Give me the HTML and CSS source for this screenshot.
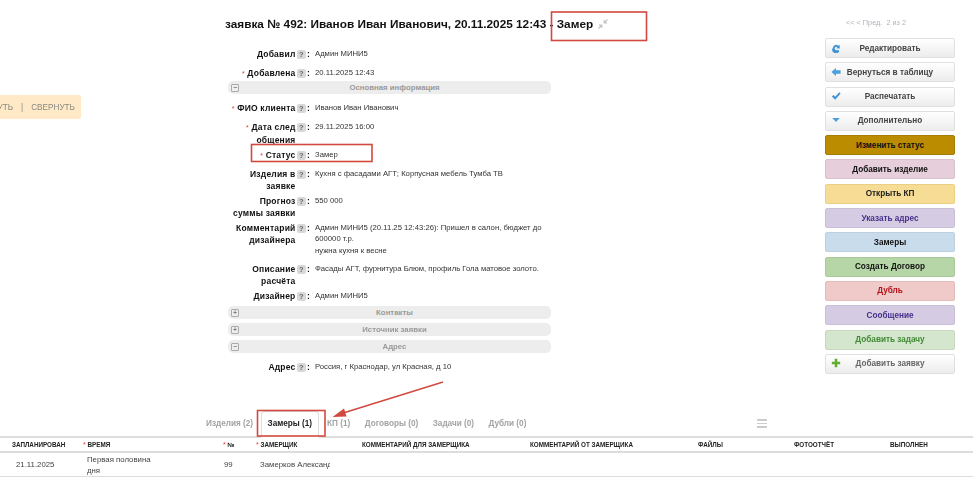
FILE: index.html
```html
<!DOCTYPE html>
<html lang="ru">
<head>
<meta charset="utf-8">
<title>заявка № 492</title>
<link rel="stylesheet" href="styles.css">
</head>
<body>
<div class="page">
  <div class="toast"><span class="toast-text">РАЗВЕРНУТЬ<span class="toast-sep">|</span>СВЕРНУТЬ</span></div>

  <div class="main">
    <div class="center">
      <h1 class="title">заявка № 492: Иванов Иван Иванович, 20.11.2025 12:43 - Замер
        <svg class="title-icon" viewBox="0 0 10 10" width="10" height="10"><path d="M0.5 9.5 4 6M1 6.2h2.8V9M9.5 .5 6 4M9 3.8H6.2V1" fill="none" stroke="#c4c4c4" stroke-width="1.2"/></svg>
      </h1>

      <div class="row">
        <div class="label"><span class="label-text">Добавил</span><span class="help">?</span><span class="colon">:</span></div>
        <div class="value">Админ МИНИ5</div>
      </div>
      <div class="row">
        <div class="label"><span class="label-text"><i class="req">*</i> Добавлена</span><span class="help">?</span><span class="colon">:</span></div>
        <div class="value">20.11.2025 12:43</div>
      </div>

      <div class="section section-first"><span class="toggle">−</span><span class="section-name">Основная информация</span></div>

      <div class="row">
        <div class="label"><span class="label-text"><i class="req">*</i> ФИО клиента</span><span class="help">?</span><span class="colon">:</span></div>
        <div class="value">Иванов Иван Иванович</div>
      </div>
      <div class="row row-next">
        <div class="label"><span class="label-text"><i class="req">*</i> Дата след<br>общения</span><span class="help">?</span><span class="colon">:</span></div>
        <div class="value">29.11.2025 16:00</div>
      </div>
      <div class="row">
        <div class="label"><span class="label-text"><i class="req">*</i> Статус</span><span class="help">?</span><span class="colon">:</span></div>
        <div class="value">Замер</div>
      </div>
      <div class="row">
        <div class="label"><span class="label-text">Изделия в<br>заявке</span><span class="help">?</span><span class="colon">:</span></div>
        <div class="value">Кухня с фасадами АГТ; Корпусная мебель Тумба ТВ</div>
      </div>
      <div class="row">
        <div class="label"><span class="label-text">Прогноз<br>суммы заявки</span><span class="help">?</span><span class="colon">:</span></div>
        <div class="value">550 000</div>
      </div>
      <div class="row row-comment">
        <div class="label"><span class="label-text">Комментарий<br>дизайнера</span><span class="help">?</span><span class="colon">:</span></div>
        <div class="value">Админ МИНИ5 (20.11.25 12:43:26): Пришел в салон, бюджет до<br>600000 т.р.<br>нужна кухня к весне</div>
      </div>
      <div class="row">
        <div class="label"><span class="label-text">Описание<br>расчёта</span><span class="help">?</span><span class="colon">:</span></div>
        <div class="value">Фасады АГТ, фурнитура Блюм, профиль Гола матовое золото.</div>
      </div>
      <div class="row">
        <div class="label"><span class="label-text">Дизайнер</span><span class="help">?</span><span class="colon">:</span></div>
        <div class="value">Админ МИНИ5</div>
      </div>

      <div class="section section-top"><span class="toggle">+</span><span class="section-name">Контакты</span></div>
      <div class="section"><span class="toggle">+</span><span class="section-name">Источник заявки</span></div>
      <div class="section section-last"><span class="toggle">−</span><span class="section-name">Адрес</span></div>

      <div class="row">
        <div class="label"><span class="label-text">Адрес</span><span class="help">?</span><span class="colon">:</span></div>
        <div class="value">Россия, г Краснодар, ул Красная, д 10</div>
      </div>
    </div>

    <aside class="side">
      <div class="pager">&lt;&lt; &lt; Пред. &nbsp;2 из 2</div>
      <div class="buttons">
        <a class="btn btn-white">
          <svg class="btn-icon" viewBox="0 0 12 12" width="10" height="10"><path d="M2.2 6.3A3.8 3.8 0 0 1 8.6 3.3L10.2 2 10.6 6.6 6.2 6.3 7.6 5A2 2 0 0 0 4.4 6.6 2.4 2.4 0 0 0 8.6 8L10 9.6A4.5 4.5 0 0 1 1.4 7.2Z" fill="#3f93d6"/></svg>
          Редактировать</a>
        <a class="btn btn-white">
          <svg class="btn-icon" viewBox="0 0 12 12" width="10" height="10"><path d="M0.5 6 6 1.2V4H11.5V8H6V10.8Z" fill="#4b9fdc"/></svg>
          Вернуться в таблицу</a>
        <a class="btn btn-white">
          <svg class="btn-icon" viewBox="0 0 12 12" width="10" height="10"><path d="M1 6.5 3 4.8 5 7 10 1.5 11.5 3 5 10.5Z" fill="#3f93d6"/></svg>
          Распечатать</a>
        <a class="btn btn-white">
          <svg class="btn-icon" viewBox="0 0 12 12" width="10" height="10"><path d="M1.5 3.5H10.5L6 8.5Z" fill="#4b9fdc"/></svg>
          Дополнительно</a>
        <a class="btn btn-gold">Изменить статус</a>
        <a class="btn btn-pink">Добавить изделие</a>
        <a class="btn btn-yellow">Открыть КП</a>
        <a class="btn btn-purple">Указать адрес</a>
        <a class="btn btn-blue">Замеры</a>
        <a class="btn btn-green">Создать Договор</a>
        <a class="btn btn-red">Дубль</a>
        <a class="btn btn-purple">Сообщение</a>
        <a class="btn btn-lime">Добавить задачу</a>
        <a class="btn btn-white btn-soft">
          <svg class="btn-icon" viewBox="0 0 12 12" width="10" height="10"><path d="M4.5 1H7.5V4.5H11V7.5H7.5V11H4.5V7.5H1V4.5H4.5Z" fill="#5fae2e"/></svg>
          Добавить заявку</a>
      </div>
    </aside>
  </div>

  <div class="tabs">
    <span class="tab">Изделия (2)</span>
    <span class="tab tab-active">Замеры (1)</span>
    <span class="tab">КП (1)</span>
    <span class="tab">Договоры (0)</span>
    <span class="tab">Задачи (0)</span>
    <span class="tab">Дубли (0)</span>
    <span class="burger"><i></i><i></i><i></i></span>
  </div>

  <div class="grid grid-head">
    <div class="th th-first">ЗАПЛАНИРОВАН</div>
    <div class="th th-req"><i class="req">*</i> ВРЕМЯ</div>
    <div class="th th-req"><i class="req">*</i> №</div>
    <div class="th th-req"><i class="req">*</i> ЗАМЕРЩИК</div>
    <div class="th">КОММЕНТАРИЙ ДЛЯ ЗАМЕРЩИКА</div>
    <div class="th">КОММЕНТАРИЙ ОТ ЗАМЕРЩИКА</div>
    <div class="th">ФАЙЛЫ</div>
    <div class="th">ФОТООТЧЁТ</div>
    <div class="th">ВЫПОЛНЕН</div>
  </div>
  <div class="grid grid-row">
    <div class="td td-first">21.11.2025</div>
    <div class="td td-time">Первая половина дня</div>
    <div class="td td-num">99</div>
    <div class="td td-clip"><span class="clip">Замерков Александр</span></div>
    <div class="td"></div><div class="td"></div><div class="td"></div><div class="td"></div><div class="td"></div>
  </div>

  <svg class="marks" viewBox="0 0 973 491" width="973" height="491">
    <g fill="none" stroke="#d2493f" stroke-width="1.6">
      <rect x="551.5" y="12" width="95" height="28.5"/>
      <rect x="251.5" y="144.5" width="120.5" height="17"/>
      <rect x="257.5" y="410.5" width="67.5" height="25.5"/>
      <path d="M443 382 340 414"/>
    </g>
    <path d="M332.5 417 344 408.5 346.5 416.5Z" fill="#d2493f"/>
  </svg>
</div>
</body>
</html>
```

FILE: styles.css
```css
html, body { margin: 0; padding: 0; background: #fff; }
body { font-family: "Liberation Sans", Arial, sans-serif; color: #222; }
.page { position: relative; width: 973px; height: 491px; overflow: hidden; filter: blur(0.42px); }

.toast { position: absolute; left: 0; top: 95px; width: 81px; height: 24px; background: #ffe9c6; border-radius: 0 2px 2px 0; overflow: hidden; display: flex; justify-content: flex-end; align-items: center; padding-right: 6px; box-sizing: border-box; }
.toast-text { white-space: nowrap; font-size: 8.2px; color: #8a8a80; flex: none; }
.toast-sep { margin: 0 8px; }

.main { display: flex; height: 411px; box-sizing: border-box; padding-left: 228px; }
.center { width: 323px; flex: none; }
.title { margin: 16px 0 15px -3px; font-size: 11.8px; line-height: 16px; font-weight: bold; color: #111; white-space: nowrap; height: 16px; }
.title-icon { margin-left: 2px; vertical-align: -1px; }

.row { display: flex; min-height: 18.5px; padding: 1px 0 2px; box-sizing: border-box; }
.row-next { margin-top: 0.5px; }
.row-comment { min-height: 41.5px; }
.label { width: 82px; flex: none; display: flex; justify-content: flex-end; align-items: flex-start; }
.label-text { display: block; text-align: right; font-size: 8.5px; line-height: 12px; font-weight: bold; color: #111; white-space: nowrap; letter-spacing: 0.2px; }
.req { color: #e2413c; font-style: normal; font-weight: normal; font-size: 7px; }
.help { width: 9.5px; height: 9px; margin: 2px 0 0 1px; flex: none; background: #d8d8d8; border-radius: 2px; font-size: 7.5px; line-height: 9px; text-align: center; color: #666; font-weight: bold; }
.colon { font-size: 8.5px; line-height: 12px; font-weight: bold; margin-left: 1px; width: 3px; color: #111; }
.value { flex: 1; padding-left: 5px; font-size: 7.7px; line-height: 11.6px; color: #333; white-space: nowrap; }

.section { position: relative; display: flex; align-items: center; height: 13px; margin: 4px 0; background: #ededed; border-radius: 5px; }
.section-first { margin: -3px 0 7px; }
.section-top { margin-top: -1.5px; }
.section-last { margin-bottom: 7px; }
.toggle { position: absolute; left: 3px; top: 3px; width: 6px; height: 6px; border: 1px solid #aaa; background: #eee; font-size: 7px; line-height: 6px; text-align: center; color: #444; border-radius: 1px; }
.section-name { flex: 1; padding-left: 10px; text-align: center; font-size: 7.8px; font-weight: bold; color: #999; }

.side { margin-left: auto; width: 130px; margin-right: 18px; flex: none; padding-top: 18px; }
.pager { height: 20px; padding-left: 21px; font-size: 7.3px; line-height: 10px; color: #aeb4bb; white-space: nowrap; }
.buttons { display: flex; flex-direction: column; gap: 4.3px; }
.btn { position: relative; display: flex; justify-content: center; align-items: center; height: 20px; box-sizing: border-box; border: 1px solid #ddd; border-radius: 2px; font-size: 8.2px; font-weight: bold; color: #333; }
.btn-icon { position: absolute; left: 5px; top: 3.5px; }
.btn-white { background: linear-gradient(#fff, #ececec); color: #444; border: 1.5px solid #e0e0e0; }
.btn-soft { color: #666; }
.btn-gold { background: #bb8c00; border-color: #a57c05; color: #111; }
.btn-pink { background: #e6cfda; border-color: #d9c3cd; color: #111; }
.btn-yellow { background: #f6dc94; border-color: #eacf85; color: #222; }
.btn-purple { background: #d5cce3; border-color: #c9c0d8; color: #46308c; }
.btn-blue { background: #c9dcec; border-color: #bdd0e0; color: #111; }
.btn-green { background: #b6d6a7; border-color: #a9c99b; color: #111; }
.btn-red { background: #f0c9c9; border-color: #e3bcbc; color: #b2141a; }
.btn-lime { background: #d5e6cf; border-color: #c8d9c2; color: #3f8a30; }

.tabs { display: flex; align-items: stretch; height: 25px; padding-left: 206px; border-bottom: 2px solid #ddd; }
.tab { font-size: 8.2px; font-weight: bold; color: #a3a3a3; margin-right: 14.5px; line-height: 26px; white-space: nowrap; }
.tab-active { color: #222; background: #fff; border: 1px solid #ddd; border-bottom: 2px solid #fff; border-radius: 4px 4px 0 0; padding: 0 6px; margin: 0 8px -2px -7px; line-height: 24px; }
.burger { display: flex; flex-direction: column; gap: 2px; margin: 8px 0 0 216px; width: 10px; }
.burger i { display: block; height: 1.5px; background: #ccc; }

.grid { display: grid; grid-template-columns: 80px 140px 33px 109px 168px 168px 96px 96px 83px; }
.grid-head { height: 13px; border-bottom: 2px solid #ddd; align-items: center; }
.th { font-size: 6.3px; font-weight: bold; color: #222; white-space: nowrap; line-height: 13px; }
.th-first { padding-left: 12px; }
.th-req { padding-left: 3px; }
.grid-row { height: 23px; border-bottom: 1px solid #ddd; align-items: center; }
.td { font-size: 7.8px; line-height: 11px; color: #444; padding-left: 7px; }
.td-first { padding-left: 16px; }
.td-time { padding-right: 60px; }
.td-num { padding-left: 4px; }
.td-clip { padding-right: 32px; }
.clip { display: block; white-space: nowrap; overflow: hidden; }

.marks { position: absolute; left: 0; top: 0; pointer-events: none; }
```
